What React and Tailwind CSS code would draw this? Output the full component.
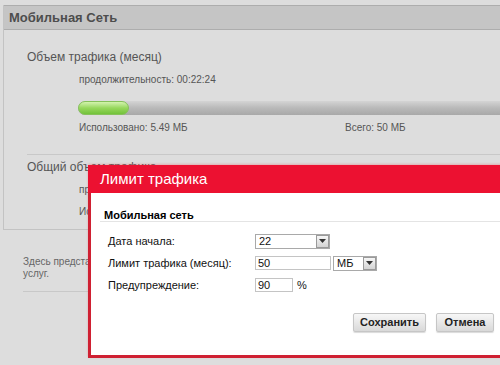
import React from 'react';

const SelectBox = ({ value, width }) => (
  <div className={`flex items-center h-[15px] bg-white border border-[#a9a9a9] ${width}`}>
    <span className="flex-1 pl-[3px] text-[11px] leading-[13px] text-[#111]">{value}</span>
    <span className="w-[13px] h-[13px] flex items-center justify-center border border-[#9a9a9a] bg-gradient-to-b from-[#f6f6f6] to-[#d4d4d4]">
      <svg width="7" height="4" viewBox="0 0 7 4">
        <path d="M0 0h7L3.5 4z" fill="#333" />
      </svg>
    </span>
  </div>
);

const TextBox = ({ value, width }) => (
  <div className={`flex items-center h-[14px] bg-white border border-[#c4c4c4] ${width}`}>
    <span className="pl-[2px] text-[11px] leading-[13px] text-[#111]">{value}</span>
  </div>
);

export default function App() {
  return (
    <div className="relative w-[500px] h-[365px] overflow-hidden bg-[#dddddd] font-['Liberation_Sans',Arial,sans-serif]">
      <div className="pt-[5px] pl-[3px]">
        <div className="w-[620px] border-l border-b border-[#c3c3c3]">
          <div className="h-[25px] flex items-center pl-[5px] bg-[#c5c5c5] border-t border-b border-[#adadad] text-[13px] font-bold text-[#4d4d4d]">
            Мобильная Сеть
          </div>
          <div className="pl-[23px] pt-[20px] pb-[11px] text-[#555]">
            <div className="text-[12px] leading-[14px]">Объем трафика (месяц)</div>
            <div className="mt-[10px] pl-[52px] text-[10px] leading-[12px]">продолжительность: 00:22:24</div>
            <div className="mt-[15px] ml-[51px] relative h-[14px] w-[520px] rounded-l-full bg-gradient-to-b from-[#d4d4d4] via-[#b9b9b9] to-[#a8a8a8]">
              <div className="absolute left-0 top-0 h-[14px] w-[51px] rounded-full border border-[#86c25a] bg-gradient-to-b from-[#d3f3ad] via-[#97d85c] to-[#72c23a]" />
            </div>
            <div className="mt-[7px] pl-[52px] flex text-[10px] leading-[12px]">
              <span className="w-[266px]">Использовано: 5.49 МБ</span>
              <span>Всего: 50 МБ</span>
            </div>
            <div className="mt-[20px] h-px bg-[#c8c8c8]" />
            <div className="mt-[5px] text-[12px] leading-[14px]">Общий объем трафика</div>
            <div className="mt-[10px] pl-[52px] text-[10px] leading-[12px]">продолжительность: 00:22:24</div>
            <div className="mt-[10px] pl-[52px] flex text-[10px] leading-[12px]">
              <span className="w-[266px]">Использовано: 5.49 МБ</span>
            </div>
          </div>
        </div>
      </div>

      <div className="pl-[23px] pt-[26px] text-[10px] leading-[12px] text-[#666]">
        {/* the rest of this note is hidden behind the dialog */}
        <div className="w-[66px] overflow-hidden whitespace-nowrap">Здесь представлена информация</div>
        <div>услуг.</div>
        <div className="mt-[11px] h-px w-[480px] bg-[#c8c8c8]" />
      </div>

      {/* dialog */}
      <div className="absolute left-[88px] top-[165px] w-[430px] border-l-[3px] border-b-[3px] border-[#cf2032] shadow-[0_-1px_2px_rgba(230,80,90,0.35)]">
        <div className="-ml-[3px] h-[28px] flex items-center pl-[12px] bg-[#ec1131] text-white text-[15px]">
          Лимит трафика
        </div>
        <div className="h-[162px] bg-white pl-[9px] pt-[16px]">
          <div className="border-b border-[#e4e4e4] pl-[4px] text-[11px] leading-[12px] font-bold text-black">
            Мобильная сеть
          </div>
          <div className="mt-[8px] text-[11px] text-[#111]">
            <div className="h-[22px] flex items-center pl-[8px]">
              <span className="w-[147px]">Дата начала:</span>
              <SelectBox value="22" width="w-[75px]" />
            </div>
            <div className="h-[22px] flex items-center pl-[8px]">
              <span className="w-[147px]">Лимит трафика (месяц):</span>
              <TextBox value="50" width="w-[76px]" />
              <div className="ml-[2px]">
                <SelectBox value="МБ" width="w-[44px]" />
              </div>
            </div>
            <div className="h-[22px] flex items-center pl-[8px]">
              <span className="w-[147px]">Предупреждение:</span>
              <TextBox value="90" width="w-[38px]" />
              <span className="ml-[4px]">%</span>
            </div>
          </div>
          <div className="mt-[17px] pl-[253px] flex gap-[10px]">
            <button className="w-[73px] h-[19px] rounded-[2px] border border-[#c6c6c6] bg-gradient-to-b from-[#f7f7f7] to-[#d9d9d9] text-[11px] font-bold text-[#222] shadow-[0_1px_1px_rgba(0,0,0,0.15)]">
              Сохранить
            </button>
            <button className="w-[58px] h-[19px] rounded-[2px] border border-[#c6c6c6] bg-gradient-to-b from-[#f7f7f7] to-[#d9d9d9] text-[11px] font-bold text-[#222] shadow-[0_1px_1px_rgba(0,0,0,0.15)]">
              Отмена
            </button>
          </div>
        </div>
      </div>
    </div>
  );
}
